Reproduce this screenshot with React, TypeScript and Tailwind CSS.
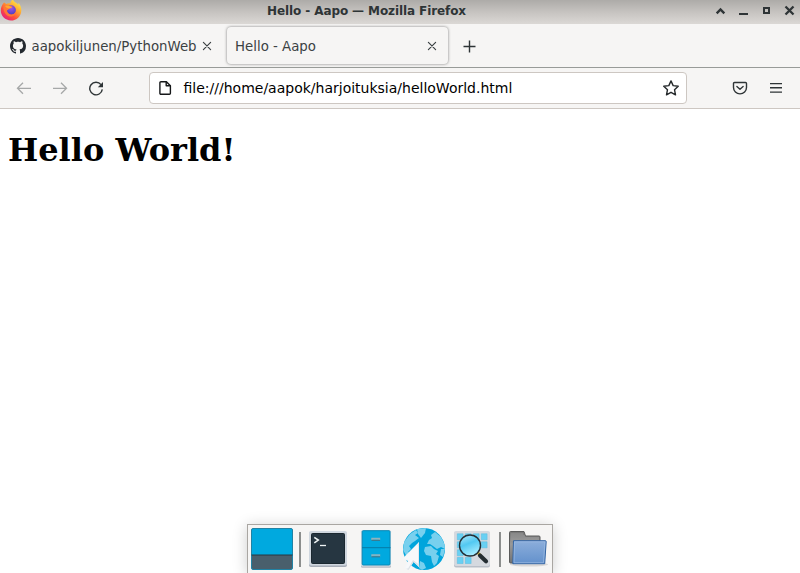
import React from "react";

function FirefoxLogo() {
  return (
    <svg className="-mt-0.5 size-[23px] shrink-0" viewBox="0 0 23 23">
      <defs>
        <linearGradient id="fox" x1="0.85" y1="0.1" x2="0.2" y2="0.95">
          <stop offset="0" stopColor="#ffe84a" />
          <stop offset="0.35" stopColor="#ffa52e" />
          <stop offset="0.68" stopColor="#ff4d3d" />
          <stop offset="1" stopColor="#e3207c" />
        </linearGradient>
        <radialGradient id="orb" cx="0.5" cy="0.3" r="0.7">
          <stop offset="0" stopColor="#a255e8" />
          <stop offset="1" stopColor="#4a3fc0" />
        </radialGradient>
      </defs>
      <path
        d="M4 4.5 C5 5 5.5 5.3 6.2 6 C7.5 5.3 9 5.2 10.4 5.5 C10.5 3.5 11.5 2 13 1.5 C13.5 4 18 5.4 18.2 7 L18.4 5 C20.5 7 21.4 9.8 21.3 12.4 C21.2 18.3 16.6 22.5 11 22.5 C5.2 22.5 .8 18 .8 12.6 C.8 9.5 2 6.8 4 4.5Z"
        fill="url(#fox)"
      />
      <circle cx="11.2" cy="12" r="4.7" fill="url(#orb)" />
      <path d="M3.5 8 C5.8 6.5 8.5 7 10 8 L12.5 8.8 C12 10 10.5 10 9.5 10.5 C8.5 11 8.3 12 7 12.2 C7.1 16.5 13 18.3 16.2 14 C16 18 10.5 20.3 6.6 17 C3.9 14.8 3 11 3.5 8Z" fill="#ff7735" />
      <path d="M5 8 C6.8 7.3 8.8 7.6 10.2 8.4 L12.3 9 C11.6 10 10.2 10 9.3 10.5 C7.5 10.2 6 9.8 5 8Z" fill="#ffa830" />
    </svg>
  );
}

function TitleBar() {
  return (
    <header className="flex h-6 items-start bg-linear-to-b from-[#adaba8] via-[#c6c3c0] to-[#dbd8d5]">
      <FirefoxLogo />
      <h1 className="flex-1 text-center text-[12px] leading-[23px] font-bold tracking-[-0.1px] whitespace-nowrap text-[#2e3436]">
        Hello - Aapo — Mozilla Firefox
      </h1>
      <svg className="h-[22px] w-[90px] shrink-0" viewBox="710 0 90 22" fill="none" stroke="#2e3436">
        <path d="M716.7 13.3 L720.5 9.5 L724.3 13.3" strokeWidth="2.4" />
        <path d="M739 14h9" strokeWidth="2" />
        <rect x="764" y="8" width="5" height="5" strokeWidth="2" />
        <path d="M785.5 6.5l8 8m0-8l-8 8" strokeWidth="2.3" />
      </svg>
    </header>
  );
}

function CloseIcon({ className }: { className: string }) {
  return (
    <svg className={`size-[10px] shrink-0 ${className}`} viewBox="0 0 10 10" stroke="#393f41" strokeWidth="1.15" strokeLinecap="round">
      <path d="M1.4 1.4l7.2 7.2m0-7.2L1.4 8.6" />
    </svg>
  );
}

function TabStrip() {
  return (
    <div className="flex h-11 items-center border-b border-[#989b98] bg-[#f6f5f4] text-[13.333px] text-[#3b4143]">
      <div className="flex h-full w-[227px] items-center pl-[10px]">
        <svg className="size-4 shrink-0" viewBox="0 0 16 16" fill="#24292f">
          <path d="M8 0C3.58 0 0 3.58 0 8c0 3.54 2.29 6.53 5.47 7.59.4.07.55-.17.55-.38 0-.19-.01-.82-.01-1.49-2.01.37-2.53-.49-2.69-.94-.09-.23-.48-.94-.82-1.13-.28-.15-.68-.52-.01-.53.63-.01 1.08.58 1.23.82.72 1.21 1.87.87 2.33.66.07-.52.28-.87.51-1.07-1.78-.2-3.64-.89-3.64-3.95 0-.87.31-1.59.82-2.15-.08-.2-.36-1.02.08-2.12 0 0 .67-.21 2.2.82.64-.18 1.32-.27 2-.27s1.36.09 2 .27c1.53-1.04 2.2-.82 2.2-.82.44 1.1.16 1.92.08 2.12.51.56.82 1.27.82 2.15 0 3.07-1.87 3.75-3.65 3.95.29.25.54.73.54 1.48 0 1.07-.01 1.93-.01 2.2 0 .21.15.46.55.38A8.01 8.01 0 0 0 16 8c0-4.42-3.58-8-8-8z" />
        </svg>
        <span className="ml-[5.5px] w-[165.5px] overflow-hidden pt-0.5 whitespace-nowrap">aapokiljunen/PythonWeb</span>
        <CloseIcon className="ml-[5px]" />
      </div>
      <div className="flex h-[37px] w-[221px] items-center rounded-[4px] bg-[#f6f5f4] pr-[11px] pl-2 shadow-[0_0_3px_rgba(0,0,0,0.5)]">
        <span className="flex-1 pt-0.5 whitespace-nowrap">Hello - Aapo</span>
        <CloseIcon className="" />
      </div>
      <svg className="mt-px ml-[15px] size-[13px]" viewBox="0 0 13 13" stroke="#2e3436" strokeWidth="1.4">
        <path d="M6.5 .5v12M.5 6.5h12" />
      </svg>
    </div>
  );
}

function NavBar() {
  return (
    <nav className="flex h-[41px] items-center border-b border-[#cdc7c2] bg-[#f6f5f4]">
      <div className="flex w-[149px] gap-5 pl-4">
        <svg className="size-4" viewBox="0 0 16 16" fill="none" stroke="#a6a8a8" strokeWidth="1.3">
          <path d="M7 2.8L1.5 8.3L7 13.8M1.5 8.3h13.5" />
        </svg>
        <svg className="size-4" viewBox="0 0 16 16" fill="none" stroke="#a6a8a8" strokeWidth="1.3">
          <path d="M9 2.8L14.5 8.3L9 13.8M14.5 8.3H1" />
        </svg>
        <svg className="size-4" viewBox="0 0 16 16" fill="none" stroke="#2e3436" strokeWidth="1.4">
          <path d="M13 4.6A6.3 6.3 0 1 0 14.3 9.4" />
          <path d="M15 2v5.2H9.8z" fill="#2e3436" stroke="none" />
        </svg>
      </div>
      <div className="flex h-8 w-[538px] items-center rounded-[4px] border border-[#cdc7c2] bg-white pr-[7px] pl-[7px]">
        <svg className="size-4" viewBox="0 0 16 16" fill="none" stroke="#151719" strokeWidth="1.4" strokeLinejoin="round">
          <path d="M3.9 1.7h5.5l4 4v7.5a1 1 0 0 1-1 1H3.9a1 1 0 0 1-1-1V2.7a1 1 0 0 1 1-1z" />
          <path d="M9.2 1.8v4h4" />
        </svg>
        <span className="ml-[10.5px] flex-1 text-[14px] whitespace-nowrap text-black">
          file:///home/aapok/harjoituksia/helloWorld.html
        </span>
        <svg className="size-4" viewBox="0 0 16 16" fill="none" stroke="#25292b" strokeWidth="1.4" strokeLinejoin="round">
          <path d="M8 .9l2.15 4.7 5.1.6-3.75 3.5 1 5.1L8 12.3l-4.5 2.5 1-5.1L.75 6.2l5.1-.6z" />
        </svg>
      </div>
      <svg className="ml-[45px] size-4" viewBox="0 0 16 16" fill="none" stroke="#2e3436" strokeWidth="1.4" strokeLinecap="round" strokeLinejoin="round">
        <path d="M2.5 2.5h11a1 1 0 0 1 1 1v4.1a6.5 6.3 0 0 1-13 0V3.5a1 1 0 0 1 1-1z" />
        <path d="M4.9 6.5L8 9.2l3.1-2.7" />
      </svg>
      <svg className="ml-5 size-4" viewBox="0 0 16 16" stroke="#2e3436" strokeWidth="1.4">
        <path d="M2 3.6h12M2 7.7h12M2 12.1h12" />
      </svg>
    </nav>
  );
}

function DesktopIcon() {
  return (
    <svg className="size-12" viewBox="0 0 48 48">
      <rect x="3.5" y="3.5" width="41" height="41" rx="1.5" fill="#00a9df" stroke="#2182a4" />
      <path d="M4 30h40v13a1 1 0 0 1-1 1H5a1 1 0 0 1-1-1z" fill="#495f6c" />
      <path d="M3.5 30h41" stroke="#263641" />
    </svg>
  );
}

function TerminalIcon() {
  return (
    <svg className="size-12" viewBox="0 0 48 48">
      <rect x="5" y="7" width="38" height="35" rx="2" fill="#a7adb7" />
      <rect x="5" y="6" width="38" height="34.5" rx="2" fill="#d0d7df" />
      <rect x="7.5" y="8.5" width="33" height="30" rx="1" fill="#263641" stroke="#1b2830" />
      <path d="M10.3 12.3l4 2.8-4 2.8" fill="none" stroke="#eef3f4" strokeWidth="1.6" />
      <path d="M16 20.5h6" stroke="#eef3f4" strokeWidth="1.3" />
    </svg>
  );
}

function CabinetIcon() {
  return (
    <svg className="size-12" viewBox="0 0 48 48">
      <rect x="9" y="6" width="30" height="36.7" rx="1.5" fill="#b5bbc4" />
      <rect x="9" y="5" width="30" height="36.5" rx="1.5" fill="#d8dde4" />
      <rect x="10.2" y="5.7" width="27.8" height="34.3" rx="1" fill="#00a9df" stroke="#0788b6" />
      <path d="M10 22.7h28.5" stroke="#067ba6" />
      <path d="M20 15v-1.6h7.5V15M20 31.5v-1.6h7.5v1.6" fill="#68b8d0" stroke="#8fb3be" strokeWidth="1.4" />
      <path d="M19.5 15.3h8.5M19.5 31.8h8.5" stroke="#47717f" />
    </svg>
  );
}

function GlobeIcon() {
  return (
    <svg className="size-12" viewBox="0 0 48 48">
      <defs>
        <clipPath id="globe">
          <circle cx="24" cy="24" r="21" />
        </clipPath>
      </defs>
      <circle cx="24" cy="24" r="21" fill="#00a5dc" />
      <g clipPath="url(#globe)" fill="#78d0ee">
        <path d="M3 25L4 17L10 9L16 5L18 8L15 10L19 13L15 16L12 18L9 21L11 24L8 27L12 29L7 32Z" />
        <path d="M17 4L26 3L25 8L21 13L18 9Z" />
        <path d="M35 7L41 12L45 20L45 24L41 22L37 24L33 21L30 19L27 19L29 15L32 13L31 10Z" />
        <path d="M25 22L31 21L34 24L38 26L36 29L39 31L37 38L34 41L32 37L31 31L26 30L24 26Z" />
        <path d="M41 24L45 24L43 32L40 30Z" />
        <path d="M20 36L24 38L26 43L22 45L19 43Z" />
      </g>
      <path d="M19 17L2.3 33.7L8 36L4 43L8.5 45L13.5 37L19 42Z" fill="#f4f6f8" />
      <path d="M19 17v25l-5.5-5-5 8-2-1L12.5 34z" fill="#dce2e7" />
      <path d="M18.3 20L4 33.5l5.7 1.8L5.5 42.5l2.5 1.2L13 35l5.3 4z" fill="#f7f8fa" />
    </svg>
  );
}

function FinderIcon() {
  return (
    <svg className="size-12" viewBox="0 0 48 48">
      <defs>
        <linearGradient id="lens" x1="0" y1="0" x2="0.4" y2="1">
          <stop offset="0" stopColor="#b5e9fb" />
          <stop offset="0.5" stopColor="#52c9f2" />
          <stop offset="1" stopColor="#a1ebff" />
        </linearGradient>
      </defs>
      <rect x="6" y="7" width="36" height="35.5" rx="2" fill="#b9bfc8" />
      <rect x="6" y="6" width="36" height="35" rx="2" fill="#d5d9df" />
      <g fill="#69d0f3" stroke="#55bce0" strokeWidth=".5">
        <path d="M9.3 8.8h5.8v6H9.3zM17.3 8.8h5.8v6h-5.8zM25.3 8.8h5.8v6h-5.8zM33.3 8.8h5.8v6h-5.8zM9.3 16.8h5.8v6H9.3zM25.3 16.8h5.8v6h-5.8zM33.3 16.8h5.8v6h-5.8zM9.3 24.8h5.8v6H9.3zM17.3 24.8h5.8v6h-5.8zM9.3 32.5h5.8v6H9.3zM17.3 32.5h5.8v6h-5.8z" />
      </g>
      <path d="M29 27l4 4" stroke="#d5b93f" strokeWidth="3" />
      <path d="M32 30.5l6 5.7" stroke="#242d33" strokeWidth="4.2" strokeLinecap="round" />
      <circle cx="22" cy="20.5" r="10.5" fill="url(#lens)" stroke="#252f36" strokeWidth="1.4" />
    </svg>
  );
}

function FolderIcon() {
  return (
    <svg className="size-12" viewBox="0 0 48 48">
      <defs>
        <linearGradient id="back" x1="0" y1="0" x2="0" y2="1">
          <stop offset="0" stopColor="#777" />
          <stop offset="0.4" stopColor="#999" />
          <stop offset="1" stopColor="#727272" />
        </linearGradient>
        <linearGradient id="front" x1="0" y1="0" x2="0" y2="1">
          <stop offset="0" stopColor="#8caedb" />
          <stop offset="1" stopColor="#6391cc" />
        </linearGradient>
      </defs>
      <ellipse cx="25" cy="39.5" rx="19" ry="2" fill="#d9d7d6" />
      <path d="M5.5 7.5a1 1 0 0 1 1-1H20l1.5 4.5h13.5a1 1 0 0 1 1 1v26H6.5a1 1 0 0 1-1-1z" fill="url(#back)" stroke="#5b5b5b" />
      <path d="M7 13h28M7 15h28M7 11h14M7 9h12" stroke="#aaa" strokeWidth=".6" />
      <path d="M9.5 15.7h32c.5 0 .8.4.7.9L40.7 38.7H8.8z" fill="url(#front)" stroke="#3465a4" strokeLinejoin="round" />
      <path d="M10.5 16.9h30.4L39.5 37.7H10z" fill="none" stroke="#9dbce2" strokeWidth=".7" />
    </svg>
  );
}

function Separator() {
  return (
    <span className="flex h-12 w-2 justify-center pt-[7px]">
      <span className="h-[35px] w-0.5 bg-[#8c8e8d]" />
    </span>
  );
}

function Dock() {
  return (
    <footer className="absolute bottom-0 left-[247px] flex h-[49px] w-[306px] border-x border-t border-[#a9a6a2] bg-[#f6f5f4] shadow-[0_2px_14px_rgba(0,0,0,0.2)]">
      <DesktopIcon />
      <Separator />
      <TerminalIcon />
      <CabinetIcon />
      <GlobeIcon />
      <FinderIcon />
      <Separator />
      <FolderIcon />
    </footer>
  );
}

export default function App() {
  return (
    <div className="relative flex h-[573px] w-[800px] flex-col overflow-hidden bg-white font-['DejaVu_Sans',sans-serif]">
      <TitleBar />
      <TabStrip />
      <NavBar />
      <main className="flex-1 pt-[22px] pl-2">
        <h1 className="font-['DejaVu_Serif',serif] text-[32px] leading-[38px] font-bold text-black">Hello World!</h1>
      </main>
      <Dock />
    </div>
  );
}
